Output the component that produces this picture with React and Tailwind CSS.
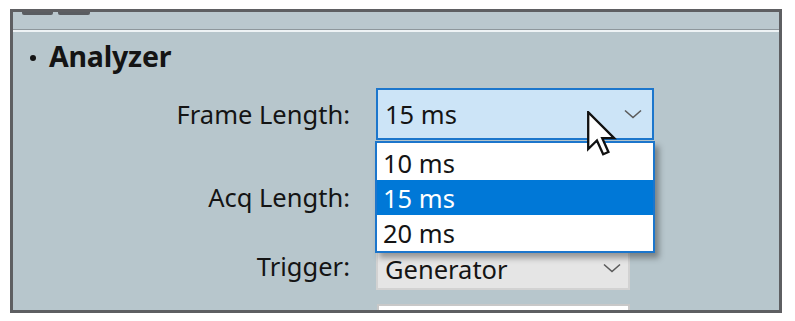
import React from "react";

const font = { fontFamily: '"Noto Sans", "Open Sans", sans-serif' };

function Chevron() {
  return (
    <svg width="18" height="10" viewBox="0 0 18 10" className="block">
      <polyline points="1,1.5 9,8.5 17,1.5" fill="none" stroke="#5a5a5a" strokeWidth="1.6" />
    </svg>
  );
}

function Cursor() {
  return (
    <svg width="30" height="46" viewBox="0 0 13 20" className="block">
      <polygon
        points="0.5,0.5 0.5,16.5 4.3,12.8 7,18.8 9.3,17.8 6.6,11.8 11.8,11.8"
        fill="#ffffff"
        stroke="#111111"
        strokeWidth="1"
        strokeLinejoin="miter"
      />
    </svg>
  );
}

export default function App() {
  return (
    <div className="relative w-[795px] h-[321px] bg-white overflow-hidden text-[#141414]" style={font}>
      <div className="ml-[10px] mt-[9px] w-[772px] h-[304px] border-[3px] border-[#5e5f62] bg-[#b7c6cc] overflow-hidden flex flex-col">
        {/* top strip */}
        <div className="shrink-0 h-[17px] bg-[#bac8ce] flex items-start gap-[5px] pl-[9px]">
          <div className="w-[31px] h-[3px] bg-[#5a5d61] rounded-b-[2px]" />
          <div className="w-[32px] h-[3px] bg-[#5a5d61] rounded-b-[2px]" />
        </div>
        <div className="shrink-0 h-[1px] bg-[#8e979c]" />
        <div className="shrink-0 h-[2px] bg-[#eef3f5]" />

        {/* heading */}
        <div className="shrink-0 mt-[8px] h-[32px] flex items-center pl-[17px]">
          <div className="w-[6px] h-[6px] bg-[#141414] rounded-full mt-[4px]" />
          <div className="ml-[13px] text-[28.5px] leading-[32px] font-bold tracking-[-0.2px]">Analyzer</div>
        </div>

        {/* rows */}
        <div className="shrink-0 mt-[16px] flex flex-col">
          <div className="shrink-0 flex items-center h-[52px]">
            <div className="w-[337px] text-right text-[25.5px] leading-[32px]">Frame Length:</div>
            <div className="ml-[26px] w-[278px] h-[52px] border-2 border-[#1c76cc] bg-[#cce4f7] flex items-center justify-between pl-[7px] pr-[10px]">
              <span className="text-[25.5px] leading-[32px]">15 ms</span>
              <Chevron />
            </div>
          </div>

          <div className="shrink-0 mt-[36px] flex items-center h-[41px]">
            <div className="w-[337px] text-right text-[25.5px] leading-[32px]">Acq Length:</div>
            <div className="ml-[26px] w-[254px] h-[41px] border border-[#c9c9c9] bg-[#e5e5e5] flex items-center justify-end pr-[8px]">
              <Chevron />
            </div>
          </div>

          <div className="shrink-0 mt-[28px] flex items-center h-[45px]">
            <div className="w-[337px] text-right text-[25.5px] leading-[32px] -mt-[4px]">Trigger:</div>
            <div className="ml-[26px] w-[254px] h-[45px] border-2 border-[#d2d2d2] bg-[#e5e5e5] flex items-center justify-between pl-[7px] pr-[7px]">
              <span className="text-[25.5px] leading-[32px] mt-[2px]">Generator</span>
              <Chevron />
            </div>
          </div>

          <div className="shrink-0 mt-[14px] flex h-[30px]">
            <div className="w-[337px]" />
            <div className="ml-[27px] w-[253px] h-[30px] border-2 border-[#c8c8c8] bg-white" />
          </div>
        </div>
      </div>

      {/* open dropdown list */}
      <div className="absolute left-[375px] top-[141px] w-[280px] border-2 border-[#1c76cc] bg-white pt-[2px] pb-[1px] shadow-[4px_5px_6px_rgba(0,0,0,0.35)]">
        <div className="h-[35px] flex items-center pl-[6px] text-[25.5px] leading-[32px]">10 ms</div>
        <div className="h-[35px] flex items-center pl-[6px] text-[25.5px] leading-[32px] bg-[#0078d7] text-white">15 ms</div>
        <div className="h-[35px] flex items-center pl-[6px] text-[25.5px] leading-[32px]">20 ms</div>
      </div>

      {/* mouse cursor */}
      <div className="absolute left-[587px] top-[111px]">
        <Cursor />
      </div>
    </div>
  );
}
